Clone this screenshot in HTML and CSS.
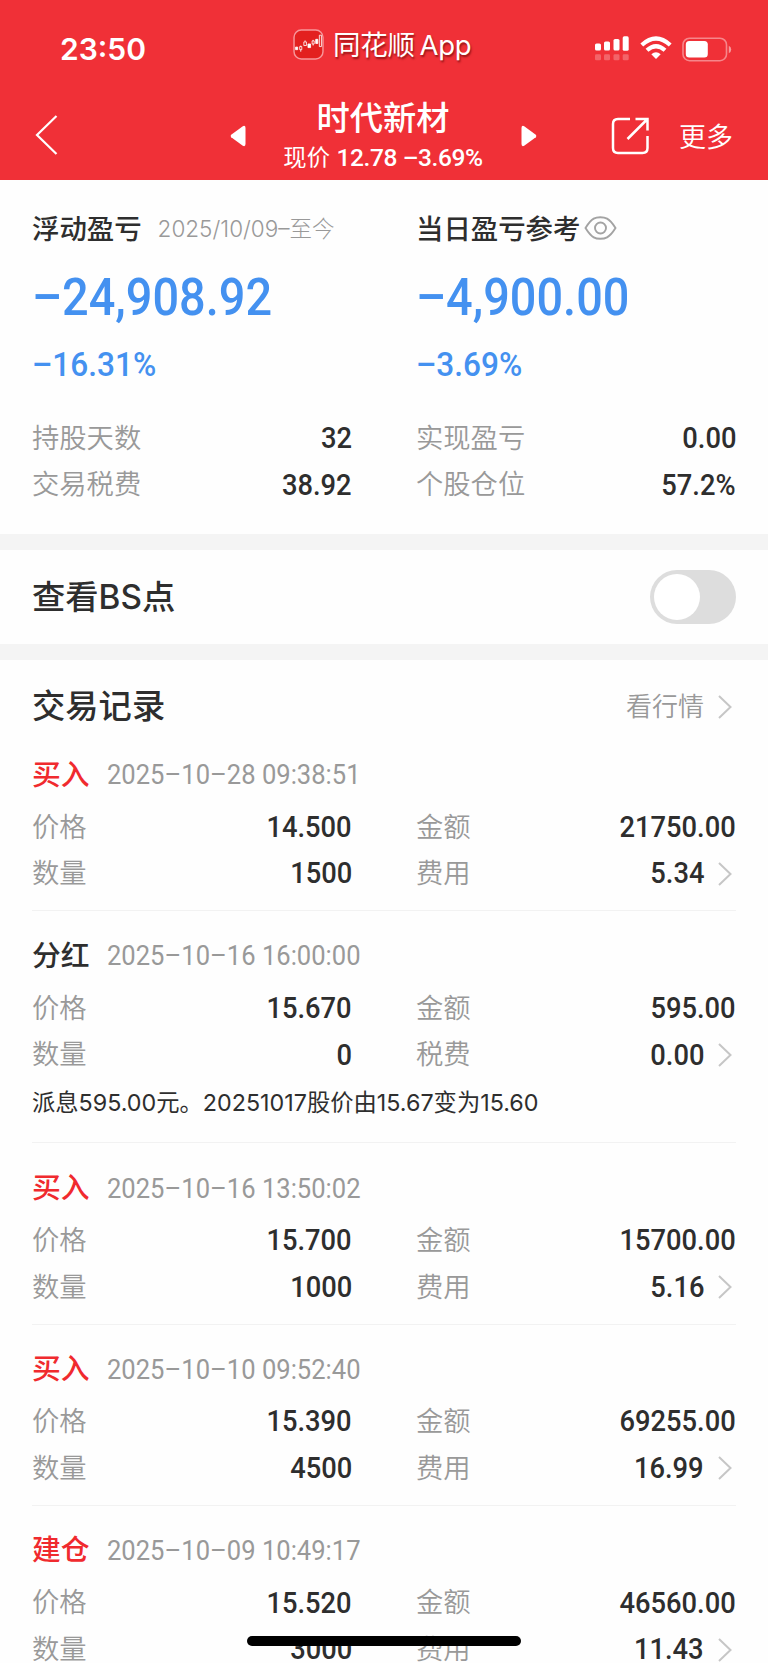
FILE: index.html
```html
<!DOCTYPE html>
<html lang="zh-CN">
<head>
<meta charset="utf-8">
<title>时代新材</title>
<link rel="stylesheet" href="styles.css">
</head>
<body>
<header class="top">
  <div class="status">
    <div class="clock">23:50</div>
    <div class="brand">
      <svg class="brand-logo" viewBox="0 0 30 30"><rect x="1" y="1" width="28" height="28" rx="7" fill="#e3201f" stroke="#f7969a" stroke-width="1.4"/><g stroke="#fff" stroke-width=".8" fill="none"><path d="M2.500 17.500h2v2.500h-2z" fill="#fff"/><path d="M6.500 17h2v3h-2zM7.500 16v1M7.500 20v2M10.500 12.500h2.500v3.500h-2.500zM11.700 11v1.500"/><path d="M14.500 14.500h2.500v3.500h-2.500zM22 10h2v4h-2z" fill="#fff"/><path d="M18.500 11.500h2v3h-2zM19.500 10.500v1M19.500 14.500v1.500M25.500 6h2v11h-2z"/></g></svg>
      <span class="brand-name">同花顺 App</span>
    </div>
    <div class="signals">
      <svg width="35" height="26" viewBox="0 0 35 26" fill="#fff"><rect x="0" y="7.500" width="6" height="7" rx="1.600"/><rect x="9" y="5.500" width="6" height="9" rx="1.600"/><rect x="18.500" y="3" width="6" height="11.500" rx="1.600"/><rect x="27.700" y="0.300" width="6" height="14.500" rx="1.600"/><g opacity=".25"><rect x="0" y="18.300" width="6" height="6" rx="1.300"/><rect x="9" y="18.300" width="6" height="6" rx="1.300"/><rect x="18.500" y="18.300" width="6" height="6" rx="1.300"/><rect x="27.700" y="18.300" width="6" height="6" rx="1.300"/></g></svg>
      <svg class="wifi" width="32" height="24" viewBox="0 0 32 24"><g fill="none" stroke="#fff" stroke-width="4.200"><path d="M1.800 9Q16-4 30.200 9"/><path d="M7 14.300Q16 6.200 25 14.300"/></g><path d="M11.300 18.200Q16 14.500 20.700 18.200L16 23z" fill="#fff"/></svg>
      <svg class="battery" width="50" height="26" viewBox="0 0 50 26"><rect x="1" y="1.200" width="43.500" height="22.500" rx="6.500" fill="none" stroke="#fff" stroke-opacity=".42" stroke-width="1.600"/><rect x="3.800" y="4" width="22" height="16.500" rx="3.500" fill="#fff"/><path d="M46.800 8.800q2.400 1 2.400 3.700t-2.400 3.700z" fill="#fff" fill-opacity=".5"/></svg>
    </div>
  </div>
  <nav class="nav">
    <svg class="back" width="24" height="42" viewBox="0 0 24 42"><path d="M21.500 2L2 21l19.500 19" fill="none" stroke="#fff" stroke-width="2.200"/></svg>
    <svg class="prev" width="16" height="22" viewBox="0 0 16 22"><path d="M12.800 1.200Q15.500 0 15.500 3V19Q15.500 22 12.800 20.800L1.200 12.300Q0 11 1.200 9.700z" fill="#fff"/></svg>
    <div class="stock">
      <div class="stock-name">时代新材</div>
      <div class="stock-price">现价 <span class="quote">12.78 –3.69%</span></div>
    </div>
    <svg class="next" width="16" height="22" viewBox="0 0 16 22"><path d="M3.200 1.200Q.5 0 .5 3V19Q.5 22 3.200 20.800L14.800 12.300Q16 11 14.800 9.700z" fill="#fff"/></svg>
    <svg class="share" width="38" height="38" viewBox="0 0 38 38"><g fill="none" stroke="#fff" stroke-width="2.500"><path d="M19 2H7Q2 2 2 7V31Q2 36 7 36H31.500Q36.500 36 36.500 31V19M24.500 2H36.500V13.500M36 2.500L16.500 22"/></g></svg>
    <div class="more">更多</div>
  </nav>
</header>

<section class="summary columns">
  <div>
    <div class="sum-title"><span>浮动盈亏</span><span class="period">2025/10/09–至今</span></div>
    <div class="big"><span>–24,908.92</span></div>
    <div class="rate"><span>–16.31%</span></div>
    <div class="row"><span>持股天数</span><b class="num">32</b></div>
    <div class="row"><span>交易税费</span><b class="num">38.92</b></div>
  </div>
  <div>
    <div class="sum-title"><span>当日盈亏参考</span><svg class="eye" width="33" height="24" viewBox="0 0 33 24"><g fill="none" stroke="#a3a3a3" stroke-width="1.900"><path d="M1.500 12C8 1.500 12 1.200 16.300 1.200S25 1.500 31.500 12C25 22.500 20.500 22.800 16.300 22.800S8 22.500 1.500 12z"/><circle cx="16.500" cy="12" r="5.500"/></g></svg></div>
    <div class="big"><span>–4,900.00</span></div>
    <div class="rate"><span>–3.69%</span></div>
    <div class="row"><span>实现盈亏</span><b class="num">0.00</b></div>
    <div class="row"><span>个股仓位</span><b class="num">57.2%</b></div>
  </div>
</section>

<section class="switch-row">
  <h2>查看BS点</h2>
  <div class="toggle"><i></i></div>
</section>

<section class="records">
  <div class="records-head">
    <h2>交易记录</h2>
    <div class="market"><span>看行情</span><svg class="chev" viewBox="0 0 14 24"><path d="M1 1l11.500 11L1 23"/></svg></div>
  </div>

  <article class="record">
    <div class="rec-head"><strong>买入</strong><time>2025–10–28 09:38:51</time></div>
    <div class="columns">
      <div class="row"><span>价格</span><b class="num">14.500</b></div>
      <div class="row"><span>金额</span><b class="num">21750.00</b></div>
      <div class="row"><span>数量</span><b class="num">1500</b></div>
      <div class="row"><span>费用</span><b class="num">5.34</b><svg class="chev" viewBox="0 0 14 24"><path d="M1 1l11.500 11L1 23"/></svg></div>
    </div>
  </article>

  <article class="record">
    <div class="rec-head"><strong class="dark">分红</strong><time>2025–10–16 16:00:00</time></div>
    <div class="columns">
      <div class="row"><span>价格</span><b class="num">15.670</b></div>
      <div class="row"><span>金额</span><b class="num">595.00</b></div>
      <div class="row"><span>数量</span><b class="num">0</b></div>
      <div class="row"><span>税费</span><b class="num">0.00</b><svg class="chev" viewBox="0 0 14 24"><path d="M1 1l11.500 11L1 23"/></svg></div>
    </div>
    <p class="note">派息595.00元。20251017股价由15.67变为15.60</p>
  </article>

  <article class="record">
    <div class="rec-head"><strong>买入</strong><time>2025–10–16 13:50:02</time></div>
    <div class="columns">
      <div class="row"><span>价格</span><b class="num">15.700</b></div>
      <div class="row"><span>金额</span><b class="num">15700.00</b></div>
      <div class="row"><span>数量</span><b class="num">1000</b></div>
      <div class="row"><span>费用</span><b class="num">5.16</b><svg class="chev" viewBox="0 0 14 24"><path d="M1 1l11.500 11L1 23"/></svg></div>
    </div>
  </article>

  <article class="record">
    <div class="rec-head"><strong>买入</strong><time>2025–10–10 09:52:40</time></div>
    <div class="columns">
      <div class="row"><span>价格</span><b class="num">15.390</b></div>
      <div class="row"><span>金额</span><b class="num">69255.00</b></div>
      <div class="row"><span>数量</span><b class="num">4500</b></div>
      <div class="row"><span>费用</span><b class="num">16.99</b><svg class="chev" viewBox="0 0 14 24"><path d="M1 1l11.500 11L1 23"/></svg></div>
    </div>
  </article>

  <article class="record">
    <div class="rec-head"><strong>建仓</strong><time>2025–10–09 10:49:17</time></div>
    <div class="columns">
      <div class="row"><span>价格</span><b class="num">15.520</b></div>
      <div class="row"><span>金额</span><b class="num">46560.00</b></div>
      <div class="row"><span>数量</span><b class="num">3000</b></div>
      <div class="row"><span>费用</span><b class="num">11.43</b><svg class="chev" viewBox="0 0 14 24"><path d="M1 1l11.500 11L1 23"/></svg></div>
    </div>
  </article>
</section>
<div class="home-bar"></div>
</body>
</html>
```
FILE: styles.css
```css
* { box-sizing: border-box; }
html { background: #fff; }
body {
  margin: 0;
  width: 768px;
  height: 1663px;
  overflow: hidden;
  position: relative;
  background: #fefefe;
  color: #2e2e2e;
  font-family: Inter, "Noto Sans CJK SC", sans-serif;
  white-space: nowrap;
}
svg { display: block; flex: none; }
h2 { margin: 0; font-size: 33.300px; font-weight: 500; line-height: 1; }

.top { height: 179.500px; background: #f03037; color: #fff; }
.status { height: 94px; display: grid; grid-template-columns: 293px 301px 1fr; }
.clock { padding: 30px 0 0 60px; font-size: 30px; line-height: 38px; font-weight: 600; }
.brand { display: flex; align-items: flex-start; padding-top: 29px; gap: 9px; }
.brand-logo { width: 31px; height: 31px; }
.brand-name { font-size: 27.500px; line-height: 32px; letter-spacing: -.2px; word-spacing: -3px; text-shadow: 1px 2px 2px rgba(90, 0, 0, .6); font-weight: 400; }
.signals { display: flex; padding: 36px 0 0 1px; align-items: flex-start; }
.wifi { margin-left: 10px; }
.battery { margin: 1px 0 0 10px; }

.nav { height: 85px; display: flex; align-items: flex-start; }
.back { margin: 20px 0 0 35px; }
.prev { margin: 31px 0 0 171px; }
.stock { width: 274px; text-align: center; }
.stock-name { height: 47px; line-height: 48px; font-size: 33.300px; font-weight: 500; }
.stock-price { height: 36px; line-height: 34px; font-size: 23.300px; font-weight: 400; }
.quote { font: 500 24.500px/34px Roboto, sans-serif; letter-spacing: -.4px; }
.next { margin: 31px 0 0 1px; }
.share { margin: 23px 0 0 74px; }
.more { margin: 24px 0 0 30px; font-size: 27px; line-height: 40px; font-weight: 350; }

.columns { display: grid; grid-template-columns: 320px 320px; column-gap: 64px; }
.summary { height: 354.500px; padding: 27.500px 32px 0; }
.sum-title { height: 40px; display: flex; align-items: center; font-size: 27.400px; font-weight: 500; }
.period { margin-left: 16px; font-size: 22.500px; font-weight: 300; color: #999; }
.eye { margin: 2px 0 0 4px; }
.big, .rate { color: #4491f0; font-family: Roboto, sans-serif; font-weight: 500; }
.big span, .rate span, time { display: inline-block; transform-origin: left center; }
.big { height: 96px; font-size: 51.500px; line-height: 102px; }
.big span { transform: scaleX(.91); }
.rate { height: 62px; font-size: 34px; line-height: 42px; }
.rate span { transform: scaleX(.93); }
.row { height: 46.600px; display: flex; align-items: center; font-size: 27.300px; font-weight: 350; color: #999; }
.row > span, .market > span { line-height: 1; }
.summary .row:nth-last-child(2) { margin-top: 10px; }
.num { margin-left: auto; font: 500 30px/1 Roboto, sans-serif; color: #2e2e2e; transform: scaleX(.91); transform-origin: right center; }
.records .num { padding-bottom: 1px; }
.chev { width: 14px; height: 24px; margin: 0 4px 0 14px; fill: none; stroke: #c6c6c6; stroke-width: 2; }

.switch-row { height: 126px; border-top: 16px solid #f4f4f4; border-bottom: 16px solid #f4f4f4; padding: 0 32px; display: flex; align-items: center; justify-content: space-between; }
.switch-row h2 { padding-top: 2px; }
.toggle { width: 86px; height: 54px; border-radius: 27px; background: #ddd; padding: 4px; }
.toggle i { display: block; width: 46px; height: 46px; border-radius: 50%; background: #fff; }

.records { padding: 0 32px; }
.records-head { height: 70px; padding-top: 24px; display: flex; justify-content: space-between; align-items: center; }
.market { display: flex; align-items: center; font-size: 26px; font-weight: 350; color: #999; }
.record { padding: 19px 0 13px; border-bottom: 1px solid #f2f2f2; }
.rec-head { height: 52px; margin-bottom: 3px; display: flex; align-items: center; }
strong { width: 75px; font-size: 28.800px; line-height: 1; font-weight: 500; color: #f02a2e; }
strong.dark { color: #2e2e2e; }
time { font: 400 27.500px/1 Roboto, sans-serif; color: #999; transform: scaleX(.93); }
.note { margin: 0; height: 51px; line-height: 50px; font-size: 23.300px; font-weight: 400; }
.home-bar { position: absolute; left: 247px; top: 1636px; width: 274px; height: 10px; border-radius: 5px; background: #000; }
```
